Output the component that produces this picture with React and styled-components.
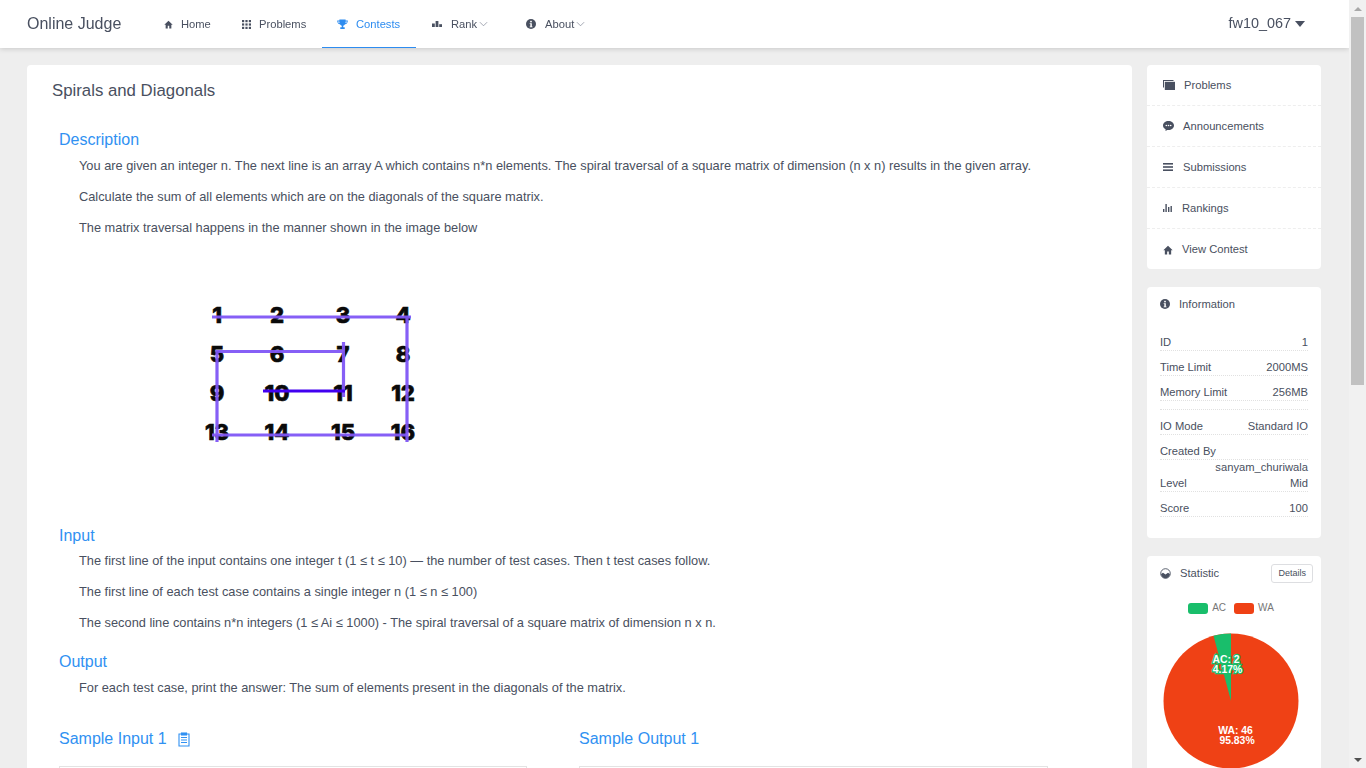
import styled, { createGlobalStyle } from "styled-components";

const GlobalStyle = createGlobalStyle`
  body {
    margin: 0;
    background: #eeeeee;
    color: #495060;
    font-family: "Liberation Sans", Arial, sans-serif;
    font-size: 12px;
    line-height: 1.5;
  }
  * { box-sizing: border-box; }
`;

const Home = ({ size = 10 }) => (
  <svg viewBox="0 0 12 12" width={size} height={size} fill="currentColor"><path d="M6 1 0.4 6.400H2.200V11.400H5V7.800H7V11.400H9.800V6.400H11.600Z" /></svg>
);
const Keypad = () => (
  <svg viewBox="0 0 9 9" width="9" height="9" fill="currentColor">
    {[0, 3.4, 6.8].flatMap((y) => [0, 3.4, 6.8].map((x) => <rect key={`${x}-${y}`} x={x} y={y} width="2.200" height="2.200" />))}
  </svg>
);
const Trophy = () => (
  <svg viewBox="0 0 12 12" width="11" height="11" fill="currentColor">
    <path d="M2.600 .6H9.400V1.600H11.800C11.800 4.200 10.500 5.400 8.800 5.700 8.300 6.600 7.400 7.100 6.800 7.300V9H8.400V11H3.600V9H5.200V7.300C4.600 7.100 3.700 6.600 3.200 5.700 1.500 5.400.2 4.200.2 1.600H2.600ZM1.200 2.600C1.300 3.600 2 4.300 2.700 4.500L2.600 2.600ZM10.800 2.600H9.400L9.300 4.500C10 4.300 10.700 3.600 10.800 2.600Z" />
  </svg>
);
const Podium = () => (
  <svg viewBox="0 0 10 6" width="10" height="6" fill="currentColor"><rect y="2.500" width="2.800" height="3.500" /><rect x="3.600" width="2.800" height="6" /><rect x="7.200" y="3.200" width="2.800" height="2.800" /></svg>
);
const Info = ({ size = 11 }) => (
  <svg viewBox="0 0 12 12" width={size} height={size}>
    <circle cx="6" cy="6" r="6" fill="currentColor" />
    <rect x="5" y="2.200" width="2" height="1.800" fill="#fff" />
    <path d="M4.400 5H7V8.900H7.800V9.900H4.400V8.900H5.200V6H4.400Z" fill="#fff" />
  </svg>
);
const Chevron = () => (
  <svg viewBox="0 0 10 6" width="9" height="6" fill="none" stroke="#808695" strokeWidth="0.800"><path d="M1 1 5 5 9 1" /></svg>
);
const Photos = () => (
  <svg viewBox="0 0 12 10" width="12" height="10" fill="currentColor">
    <path d="M0 0H10.500V1H1V7.500H0Z" /><rect x="1.800" y="1.800" width="10.200" height="8.200" />
  </svg>
);
const Chat = () => (
  <svg viewBox="0 0 11 10" width="11" height="10">
    <path d="M5.500 0C8.500 0 11 1.900 11 4.500 11 7 8.500 9 5.500 9 5.100 9 4.700 9 4.300 8.900L2.500 10 2.600 8.200C1 7.500 0 6.100 0 4.500 0 1.900 2.500 0 5.500 0Z" fill="currentColor" />
    <circle cx="3.300" cy="4.500" r=".8" fill="#fff" /><circle cx="5.500" cy="4.500" r=".8" fill="#fff" /><circle cx="7.700" cy="4.500" r=".8" fill="#fff" />
  </svg>
);
const Navicon = () => (
  <svg viewBox="0 0 10 8" width="10" height="8" fill="currentColor"><rect width="10" height="1.600" /><rect y="3.200" width="10" height="1.600" /><rect y="6.400" width="10" height="1.600" /></svg>
);
const Bars = () => (
  <svg viewBox="0 0 9 8" width="9" height="8" fill="currentColor"><rect y="5" width="1.400" height="3" /><rect x="2.400" width="1.400" height="8" /><rect x="5" y="3" width="1.400" height="5" /><rect x="7.500" y="2" width="1.400" height="6" /></svg>
);
const Analytics = () => (
  <svg viewBox="0 0 11 11" width="11" height="11">
    <circle cx="5.500" cy="5.500" r="4.800" fill="none" stroke="currentColor" strokeWidth="0.900" />
    <path d="M1 6 3 4.800 5.500 6.500 8 4.800 10 6C9.700 8.400 7.800 10.300 5.500 10.300S1.300 8.400 1 6Z" fill="currentColor" />
  </svg>
);
const Clipboard = () => (
  <svg viewBox="0 0 12 15" width="12" height="15" fill="none" stroke="currentColor" strokeWidth="1.100">
    <path d="M3.500 2H1V14H11V2H8.500" /><rect x="3.500" y="1" width="5" height="2" fill="currentColor" />
    <path d="M3 5.500H9M3 8H9M3 10.500H9" />
  </svg>
);
const Caret = () => (
  <svg viewBox="0 0 10 6" width="10" height="6" fill="currentColor"><path d="M0 0H10L5 6Z" /></svg>
);

const Header = styled.header`
  position: fixed;
  top: 0;
  left: 0;
  right: 17px;
  z-index: 10;
  height: 48px;
  display: flex;
  align-items: stretch;
  background: #fff;
  box-shadow: 0 1px 5px rgba(0, 0, 0, 0.16);
`;
const Logo = styled.div`
  width: 140px;
  padding-left: 27px;
  font-size: 16px;
  line-height: 48px;
  color: #495060;
`;
const Menu = styled.nav`
  display: flex;
`;
const MenuItem = styled.div`
  width: ${(p) => p.$w}px;
  height: 48px;
  display: flex;
  align-items: center;
  gap: ${(p) => p.$gap || 8}px;
  padding: 1px 0 0 ${(p) => p.$pl}px;
  font-size: 11.200px;
  color: ${(p) => (p.$active ? "#2d8cf0" : "#495060")};
  border-bottom: 1px solid ${(p) => (p.$active ? "#2d8cf0" : "transparent")};
`;
const Label = styled.span`
  display: inline-flex;
  align-items: center;
  gap: 2px;
`;
const User = styled.div`
  margin-left: auto;
  margin-right: 44px;
  display: flex;
  align-items: center;
  gap: 4px;
  font-size: 14.400px;
`;

const Scrollbar = styled.div`
  position: fixed;
  top: 0;
  right: 0;
  bottom: 0;
  z-index: 20;
  width: 17px;
  display: flex;
  flex-direction: column;
  align-items: center;
  background: #f1f1f1;
`;
const ScrollArrow = styled.div`
  width: 17px;
  height: 17px;
  margin-top: ${(p) => (p.$down ? "auto" : "0")};
  display: flex;
  align-items: center;
  justify-content: center;
  &::before {
    content: "";
    border-left: 4px solid transparent;
    border-right: 4px solid transparent;
    border-${(p) => (p.$down ? "top" : "bottom")}: 4px solid #505050;
    opacity: ${(p) => (p.$down ? 1 : 0.45)};
  }
`;
const ScrollThumb = styled.div`
  width: 13px;
  height: 368px;
  background: #c1c1c1;
`;

const Page = styled.main`
  display: flex;
  align-items: flex-start;
  gap: 15px;
  padding: 65px 28px 40px 27px;
  height: 1530px;
`;
const Main = styled.section`
  width: 1105px;
  flex: none;
  height: 1440px;
  padding: 14px 25px;
  background: #fff;
  border-radius: 4px;
`;
const Title = styled.h1`
  margin: 0 0 26px;
  font-size: 16.800px;
  font-weight: 400;
  line-height: 24px;
  color: #495060;
`;
const Heading = styled.h2`
  display: flex;
  align-items: center;
  gap: 11px;
  margin: 0 0 6px;
  padding-left: 7px;
  font-size: 16px;
  font-weight: 400;
  line-height: 22px;
  color: #3091f2;
`;
const Body = styled.div`
  padding: 0 0 0 27px;
  margin-top: ${(p) => (p.$tight ? -1 : 0)}px;
  margin-bottom: 19px;
`;
const Para = styled.p`
  margin: 0 0 13px;
  font-size: 12.800px;
  line-height: 18px;
  color: #495060;
`;
const Matrix = styled.div`
  margin: 53px 0 75px 100px;
  line-height: 0;
`;
const Samples = styled.div`
  display: grid;
  grid-template-columns: 468px 469px;
  column-gap: 52px;
  margin-top: 31px;
  padding-left: 7px;
`;
const SampleBox = styled.pre`
  height: 110px;
  margin: 16px 0 0;
  border: 1px solid #e3e3e3;
`;
const SampleHead = styled(Heading)`
  padding-left: 0;
`;

const Side = styled.aside`
  width: 174px;
  flex: none;
  display: flex;
  flex-direction: column;
  gap: 18px;
`;
const Card = styled.div`
  background: #fff;
  border-radius: 4px;
`;
const NavItem = styled.div`
  height: ${(p) => (p.$last ? 40 : 41)}px;
  display: flex;
  align-items: center;
  gap: ${(p) => p.$gap}px;
  padding: ${(p) => (p.$last ? 2 : 0)}px 0 0 16px;
  font-size: 11.200px;
  color: #495060;
  border-bottom: 1px dashed ${(p) => (p.$last ? "transparent" : "#eeeeee")};
`;
const CardHead = styled.div`
  display: flex;
  align-items: center;
  gap: 9px;
  height: 34px;
  padding: 0 8px 0 13px;
  font-size: 11.200px;
`;
const InfoList = styled.div`
  padding: 5px 13px 21px;
`;
const InfoRow = styled.div`
  display: flex;
  justify-content: space-between;
  height: ${(p) => (p.$spacer ? 9 : 25)}px;
  padding-top: ${(p) => (p.$spacer ? 0 : 9)}px;
  font-size: 11.200px;
  line-height: 14px;
  border-bottom: 1px dotted #e1e1e1;
`;
const CreatorName = styled.div`
  text-align: right;
  font-size: 11.200px;
  line-height: 14px;
  margin-bottom: -7px;
`;
const Details = styled.button`
  margin-left: auto;
  height: 19px;
  padding: 0 6px;
  font: 9px "Liberation Sans", Arial, sans-serif;
  color: #495060;
  background: #fff;
  border: 1px solid #dddee1;
  border-radius: 3px;
`;
const Legend = styled.div`
  display: flex;
  justify-content: center;
  gap: 8px;
  margin-top: 12px;
  padding-right: 6px;
  font-size: 10px;
  line-height: 12px;
  color: #777;
`;
const LegendItem = styled.span`
  display: inline-flex;
  align-items: center;
  gap: 4px;
  &::before {
    content: "";
    width: 20px;
    height: 11px;
    border-radius: 3px;
    background: ${(p) => p.$color};
  }
`;
const Chart = styled.div`
  display: flex;
  justify-content: center;
  margin-top: 19px;
  padding-right: 6px;
  height: 150px;
`;

const MatrixDrawing = () => {
  const xs = [38, 98, 164, 224];
  const ys = [25, 64, 103, 142];
  const labels = [1, 2, 3, 4, 5, 6, 7, 8, 9, 10, 11, 12, 13, 14, 15, 16];
  return (
    <svg width="240" height="160" viewBox="0 0 240 160">
      {labels.map((n, i) => (
        <text
          key={n}
          x={xs[i % 4]}
          y={ys[Math.floor(i / 4)] + 8}
          textAnchor="middle"
          fontFamily="Inter, sans-serif"
          fontWeight="800"
          fontSize="22"
          fill="#0a0a0a"
          stroke="#0a0a0a"
          strokeWidth="0.700"
        >
          {n}
        </text>
      ))}
      <path d="M33 27H232M228 27V152M33 145H228M38 152V61.500H165M164.500 52V107" fill="none" stroke="#7f56f5" strokeWidth="3.200" opacity="0.95" />
      <path d="M84 101H166" stroke="#4200f0" strokeWidth="3.200" />
    </svg>
  );
};

const PieLabel = styled.text`
  paint-order: stroke;
  stroke: ${(p) => p.$halo};
  stroke-width: 2.500px;
`;

const StatChart = () => (
  <svg width="136" height="136" viewBox="-68 -68 136 136" fontFamily='"Liberation Sans", sans-serif' fontWeight="700" fontSize="10.400" textAnchor="middle">
    <circle r="67.500" fill="#ef4115" />
    <path d="M0 0 L0 -67.500 A67.500 67.500 0 0 0 -17.500 -65.200Z" fill="#19be6b" />
    <g fill="#fff">
      <PieLabel $halo="#19be6b" x="-5" y="-38">AC: 2</PieLabel>
      <PieLabel $halo="#19be6b" x="-3.500" y="-28">4.17%</PieLabel>
      <text x="4.500" y="33">WA: 46</text>
      <text x="6" y="43">95.83%</text>
    </g>
  </svg>
);

export default function App() {
  const info = [
    ["ID", "1"],
    ["Time Limit", "2000MS"],
    ["Memory Limit", "256MB"],
  ];
  return (
    <>
      <GlobalStyle />
      <Header>
        <Logo>Online Judge</Logo>
        <Menu>
          <MenuItem $w={78} $pl={24}><Home size={9} />Home</MenuItem>
          <MenuItem $w={104} $pl={24}><Keypad />Problems</MenuItem>
          <MenuItem $w={94} $pl={15} $active><Trophy />Contests</MenuItem>
          <MenuItem $w={94} $pl={16} $gap={9}><Podium /><Label>Rank <Chevron /></Label></MenuItem>
          <MenuItem $w={90} $pl={16} $gap={9}><Info size={10} /><Label>About <Chevron /></Label></MenuItem>
        </Menu>
        <User>fw10_067 <Caret /></User>
      </Header>
      <Scrollbar>
        <ScrollArrow />
        <ScrollThumb />
        <ScrollArrow $down />
      </Scrollbar>
      <Page>
        <Main>
          <Title>Spirals and Diagonals</Title>
          <Heading>Description</Heading>
          <Body>
            <Para>You are given an integer n. The next line is an array A which contains n*n elements. The spiral traversal of a square matrix of dimension (n x n) results in the given array.</Para>
            <Para>Calculate the sum of all elements which are on the diagonals of the square matrix.</Para>
            <Para>The matrix traversal happens in the manner shown in the image below</Para>
            <Matrix><MatrixDrawing /></Matrix>
          </Body>
          <Heading>Input</Heading>
          <Body $tight>
            <Para>The first line of the input contains one integer t (1 ≤ t ≤ 10) — the number of test cases. Then t test cases follow.</Para>
            <Para>The first line of each test case contains a single integer n (1 ≤ n ≤ 100)</Para>
            <Para>The second line contains n*n integers (1 ≤ Ai ≤ 1000) - The spiral traversal of a square matrix of dimension n x n.</Para>
          </Body>
          <Heading>Output</Heading>
          <Body>
            <Para>For each test case, print the answer: The sum of elements present in the diagonals of the matrix.</Para>
          </Body>
          <Samples>
            <div>
              <SampleHead>Sample Input 1 <Clipboard /></SampleHead>
              <SampleBox />
            </div>
            <div>
              <SampleHead>Sample Output 1</SampleHead>
              <SampleBox />
            </div>
          </Samples>
        </Main>
        <Side>
          <Card>
            <NavItem $gap={9}><Photos />Problems</NavItem>
            <NavItem $gap={9}><Chat />Announcements</NavItem>
            <NavItem $gap={10}><Navicon />Submissions</NavItem>
            <NavItem $gap={10}><Bars />Rankings</NavItem>
            <NavItem $gap={9} $last><Home />View Contest</NavItem>
          </Card>
          <Card>
            <CardHead><Info size={10} />Information</CardHead>
            <InfoList>
              {info.map(([k, v]) => (
                <InfoRow key={k}><span>{k}</span><span>{v}</span></InfoRow>
              ))}
              <InfoRow $spacer />
              <InfoRow><span>IO Mode</span><span>Standard IO</span></InfoRow>
              <InfoRow><span>Created By</span></InfoRow>
              <CreatorName>sanyam_churiwala</CreatorName>
              <InfoRow><span>Level</span><span>Mid</span></InfoRow>
              <InfoRow><span>Score</span><span>100</span></InfoRow>
            </InfoList>
          </Card>
          <Card>
            <CardHead><Analytics />Statistic<Details>Details</Details></CardHead>
            <Legend><LegendItem $color="#19be6b">AC</LegendItem><LegendItem $color="#ef4115">WA</LegendItem></Legend>
            <Chart><StatChart /></Chart>
          </Card>
        </Side>
      </Page>
    </>
  );
}
